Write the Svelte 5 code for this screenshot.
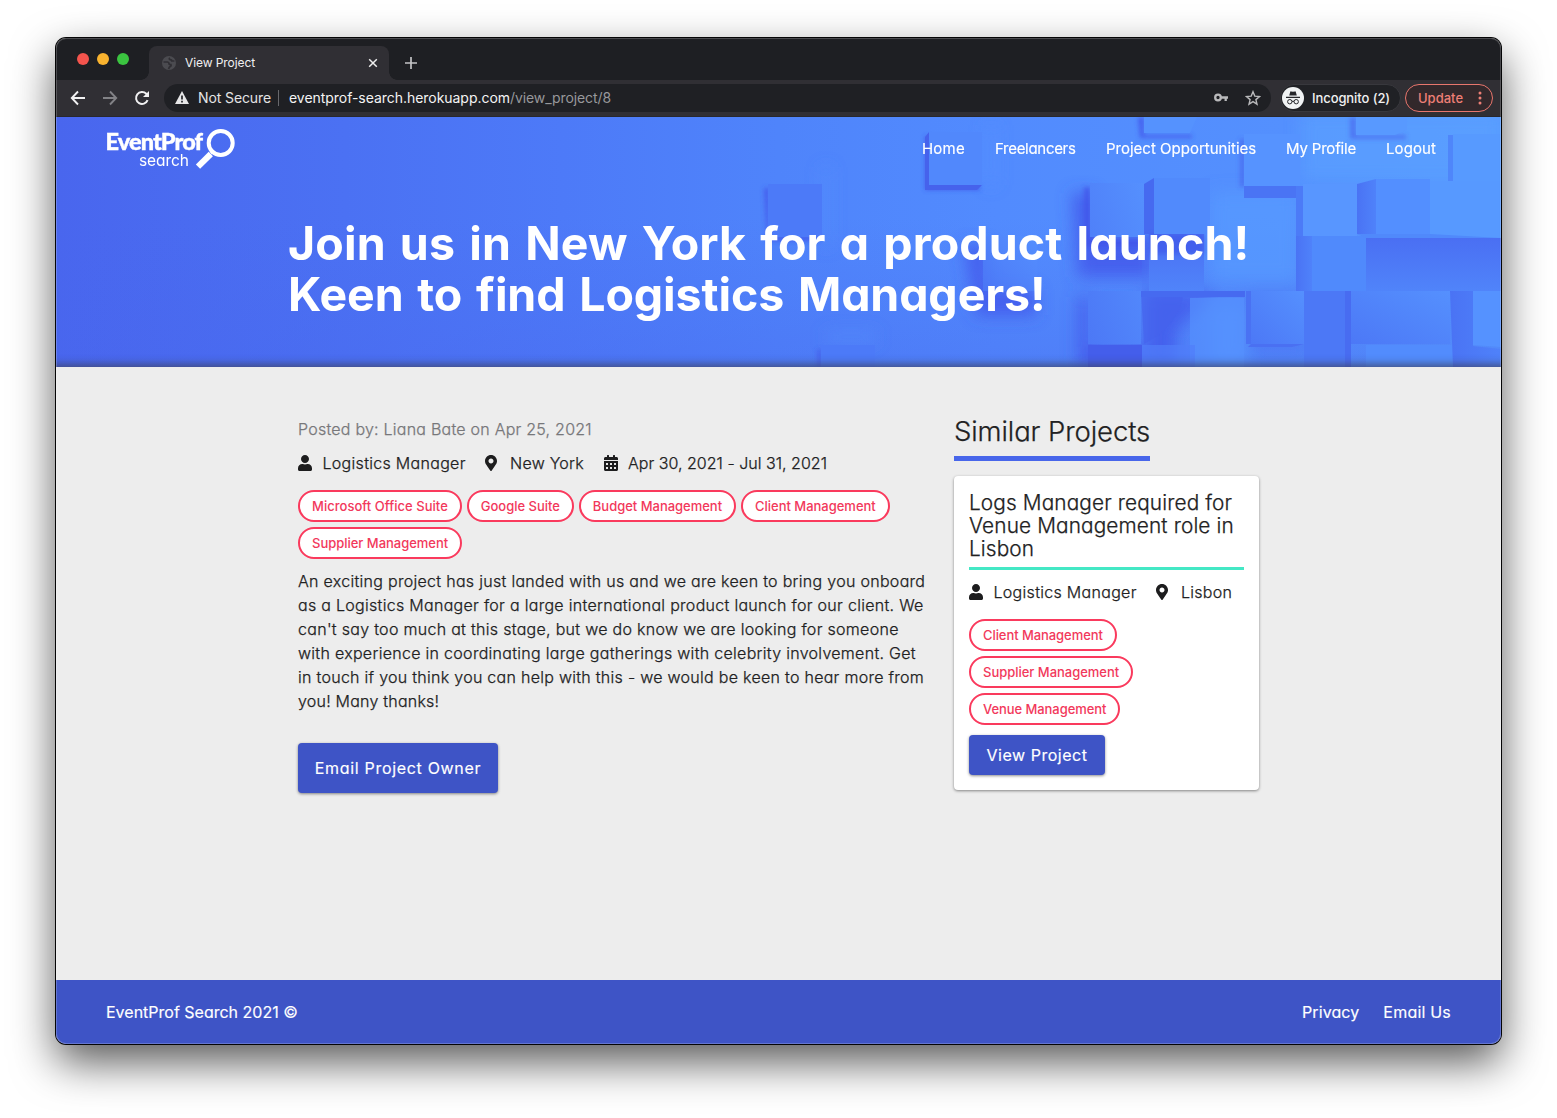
<script>
  const paths = {
    user: { w: 448, d: 'M224 256c70.7 0 128-57.3 128-128S294.7 0 224 0 96 57.3 96 128s57.3 128 128 128zm89.6 32h-16.7c-22.2 10.2-46.9 16-72.9 16s-50.6-5.8-72.9-16h-16.7C60.2 288 0 348.2 0 422.4V464c0 26.5 21.5 48 48 48h352c26.5 0 48-21.5 48-48v-41.6c0-74.2-60.2-134.4-134.4-134.4z' },
    pin: { w: 384, d: 'M172.268 501.67C26.97 291.031 0 269.413 0 192 0 85.961 85.961 0 192 0s192 85.961 192 192c0 77.413-26.97 99.031-172.268 309.67-9.535 13.774-29.93 13.773-39.464 0zM192 272c44.183 0 80-35.817 80-80s-35.817-80-80-80-80 35.817-80 80 35.817 80 80 80z' },
    calendar: { w: 448, d: 'M0 464c0 26.5 21.5 48 48 48h352c26.5 0 48-21.5 48-48V192H0v272zm320-196c0-6.600 5.400-12 12-12h40c6.600 0 12 5.400 12 12v40c0 6.600-5.400 12-12 12h-40c-6.600 0-12-5.400-12-12v-40zm0 128c0-6.600 5.400-12 12-12h40c6.600 0 12 5.400 12 12v40c0 6.600-5.400 12-12 12h-40c-6.600 0-12-5.400-12-12v-40zM192 268c0-6.600 5.400-12 12-12h40c6.600 0 12 5.400 12 12v40c0 6.600-5.400 12-12 12h-40c-6.600 0-12-5.400-12-12v-40zm0 128c0-6.600 5.400-12 12-12h40c6.600 0 12 5.400 12 12v40c0 6.600-5.400 12-12 12h-40c-6.600 0-12-5.400-12-12v-40zM64 268c0-6.600 5.400-12 12-12h40c6.600 0 12 5.400 12 12v40c0 6.600-5.400 12-12 12H76c-6.600 0-12-5.400-12-12v-40zm0 128c0-6.600 5.400-12 12-12h40c6.600 0 12 5.400 12 12v40c0 6.600-5.400 12-12 12H76c-6.600 0-12-5.400-12-12v-40zM400 64h-48V16c0-8.800-7.200-16-16-16h-32c-8.800 0-16 7.200-16 16v48H160V16c0-8.800-7.200-16-16-16h-32c-8.800 0-16 7.200-16 16v48H48C21.500 64 0 85.500 0 112v48h448v-48c0-26.500-21.500-48-48-48z' }
  };
  const skills = ['Microsoft Office Suite', 'Google Suite', 'Budget Management', 'Client Management', 'Supplier Management'];
  const similarSkills = ['Client Management', 'Supplier Management', 'Venue Management'];
  const description = [
    'An exciting project has just landed with us and we are keen to bring you onboard',
    'as a Logistics Manager for a large international product launch for our client. We',
    "can't say too much at this stage, but we do know we are looking for someone",
    'with experience in coordinating large gatherings with celebrity involvement. Get',
    'in touch if you think you can help with this - we would be keen to hear more from',
    'you! Many thanks!'
  ];
</script>

{#snippet icon(name)}
  <svg class="icon {name}" viewBox="0 0 {paths[name].w} 512"><path d={paths[name].d} /></svg>
{/snippet}

<div class="desktop">
  <div class="window">
    <div class="tabs">
      <div class="lights"><i class="red"></i><i class="amber"></i><i class="green"></i></div>
      <div class="tab">
        <svg class="globe" viewBox="0 0 14 14"><circle cx="7" cy="7" r="7" fill="#4b4b50" /><path d="M1.500 6h4q1.500.3 1.500 1.500t2 1.200q.6 1.500-1.500 2.300l-1 2" fill="none" stroke="#302f34" stroke-width="1.700" /><path d="M8 1.800q-1.500 1.200 0 1.800 1.800 0 1.800 1.400h2.600" fill="none" stroke="#302f34" stroke-width="1.700" /></svg>
        <span>View Project</span>
        <svg class="close" viewBox="0 0 10 10"><path d="M1.200 1.200l7.600 7.600M8.800 1.200L1.200 8.800" stroke="#eee" stroke-width="1.500" /></svg>
      </div>
      <svg class="plus" viewBox="0 0 12 12"><path d="M6 0v12M0 6h12" stroke="#c4c4c6" stroke-width="1.700" /></svg>
    </div>
    <div class="toolbar">
      <svg class="nav-icon" viewBox="0 0 16 16"><path d="M15 8H2M8 1.500L1.800 8 8 14.500" fill="none" stroke="#f1f1f2" stroke-width="1.900" /></svg>
      <svg class="nav-icon" viewBox="0 0 16 16"><path d="M1 8h13M8 1.500L14.200 8 8 14.500" fill="none" stroke="#828286" stroke-width="1.900" /></svg>
      <svg class="nav-icon" viewBox="0 0 16 16"><path d="M13.600 10.200A6 6 0 1 1 12.300 3.700L14 5.400" fill="none" stroke="#f1f1f2" stroke-width="2" /><path d="M15 1v6H9z" fill="#f1f1f2" /></svg>
      <div class="address">
        <svg class="warn" viewBox="0 0 14 13"><path d="M7 0l7 13H0z" fill="#e6e6e7" /><path d="M7 4.500v4M7 9.800v1.700" stroke="#1f2024" stroke-width="1.700" /></svg>
        <span class="insecure">Not Secure</span>
        <span class="bar"></span>
        <span class="host">eventprof-search.herokuapp.com</span><span class="path">/view_project/8</span>
        <svg class="key" viewBox="0 0 14 9"><circle cx="4" cy="4.500" r="2.800" fill="none" stroke="#b9b9bb" stroke-width="2.300" /><path d="M7 4.500h7M11.700 4.500v3.600" stroke="#b9b9bb" stroke-width="2.300" /></svg>
        <svg class="star" viewBox="0 0 16 16"><path d="M8 1.700l1.800 4.400 4.700.4-3.600 3.100 1.100 4.600L8 11.700l-4 2.500 1.100-4.600-3.600-3.100 4.700-.4z" fill="none" stroke="#b9b9bb" stroke-width="1.400" /></svg>
      </div>
      <div class="incognito">
        <svg viewBox="0 0 22 22"><circle cx="11" cy="11" r="11" fill="#f1f3f4" /><path d="M7.200 8.600l1-3.700q.2-.7.900-.5l1.900.3 1.900-.3q.7-.2.900.5l1 3.700zM4 9.800h14v1.100H4z" fill="#25262a" /><circle cx="7.800" cy="14.700" r="2.200" fill="none" stroke="#25262a" /><circle cx="14.200" cy="14.700" r="2.200" fill="none" stroke="#25262a" /><path d="M10 14.500q1-.7 2 0" fill="none" stroke="#25262a" /></svg>
        <span>Incognito (2)</span>
      </div>
      <div class="update"><span>Update</span><svg viewBox="0 0 4 14"><circle cx="2" cy="2" r="1.500" /><circle cx="2" cy="7" r="1.500" /><circle cx="2" cy="12" r="1.500" /></svg></div>
    </div>

    <header class="hero">
      <svg class="cubes" viewBox="0 0 1445 250" preserveAspectRatio="none">
        <defs>
          <linearGradient id="base" x1="0" x2="1" y1="0" y2="0"><stop offset="0" stop-color="#4966ee" /><stop offset=".2" stop-color="#4b71f3" /><stop offset=".35" stop-color="#4d7af8" /><stop offset=".5" stop-color="#4f84fb" /><stop offset=".65" stop-color="#528bfe" /><stop offset=".85" stop-color="#5490fe" /><stop offset="1" stop-color="#579aff" /></linearGradient>
          <linearGradient id="low" x1="0" x2="0" y1="0" y2="1"><stop offset=".4" stop-color="#4866ed" stop-opacity="0" /><stop offset="1" stop-color="#4866ed" stop-opacity=".35" /></linearGradient>
          <linearGradient id="down" x1="0" x2="0" y1="0" y2="1"><stop offset="0" stop-color="#4a6ff3" /><stop offset="1" stop-color="#5084fa" /></linearGradient>
          <linearGradient id="side" x1="0" x2="1"><stop offset="0" stop-color="#4a73f4" /><stop offset="1" stop-color="#4f82fa" /></linearGradient>
          <linearGradient id="face" x1="0" x2="1" y1="1" y2="0"><stop offset="0" stop-color="#4c78f6" /><stop offset="1" stop-color="#5590fe" /></linearGradient>
          <filter id="soft" x="-50%" y="-50%" width="200%" height="200%"><feGaussianBlur stdDeviation="8" /></filter>
          <filter id="edge" x="-50%" y="-50%" width="200%" height="200%"><feGaussianBlur stdDeviation="2" /></filter>
        </defs>
        <rect width="1445" height="250" fill="url(#base)" />
        <rect width="1445" height="250" fill="url(#low)" />
        <g filter="url(#soft)">
          <path d="M712 50h54v80h8V50z M770 215h50v10h-50z M930 8v60h10V8z" fill="#5793ff" opacity=".45" />
          <path d="M908 128h24v44h48v26h-60zM1016 76h22v44h60v40h-76zM1022 180h12v50h52v20h-64z" fill="#4053e8" opacity=".75" />
          <path d="M1090 175h70l-40 40v35h-30z" fill="#4158ea" opacity=".8" />
          <path d="M1190 175h60v60h-60z" fill="#4562ec" opacity=".3" />
          <path d="M1155 75h87v90h-87zM1155 190h36v60h-36z" fill="#579aff" opacity=".7" />
          <path d="M1245 -5h200v70h-200z" fill="#5aa2ff" opacity=".6" />
        </g>
        <g filter="url(#edge)" fill="#4053e8">
          <path d="M708 71h5v48h50v5h-52zM869 19h5v50h50v4h-55zM1082 0h6v18h48v3h-52zM1028 70h6v52h55v8h-61z" opacity=".75" />
          <path d="M761 232h5v18h-5zM1294 0h6v18h50v4h-56zM1184 22h5v48h-5z" opacity=".5" />
        </g>
        <path d="M712 67h54v53h-54zM765 228h54v22h-54z" fill="#4c7af8" />
        <path d="M869 20l4-5v53h53l-5 5h-52z" fill="#4662ec" />
        <path d="M873 15h53v53h-53z" fill="#5188fc" />
        <path d="M927 119h54v55h-54z" fill="url(#face)" opacity=".85" />
        <path d="M1034 66h54v54h-54zM1032 174h53v53h-53z" fill="url(#face)" />
        <path d="M1085 174h43q-4 34-40 53z" fill="#4562ec" opacity=".65" />
        <path d="M1085 174h104v6h-104z" fill="#466af0" />
        <path d="M1134 181h54v69h-54z" fill="#5590fe" opacity=".7" />
        <path d="M1032 228h54v22h-54z" fill="#445eeb" />
        <path d="M1086 228h53v22h-53z" fill="#507dfa" opacity=".7" />
        <path d="M1088 0h53l-7 16h-46z" fill="#5592fe" />
        <path d="M1088 67l10-6v56h-10z" fill="#466af0" />
        <path d="M1093 117h55v57h-55z" fill="url(#down)" />
        <path d="M1093 117h55v20h-55z" fill="#4158ea" opacity=".7" filter="url(#edge)" />
        <path d="M1098 61h56v56h-56z" fill="#518afc" />
        <path d="M1086 120h7v54h-7z" fill="#4a75f5" opacity=".25" />
        <path d="M1188 69h52v12h-52z" fill="#4a74f4" />
        <path d="M1240 69h7v50h-7z" fill="#4c7bf7" />
        <path d="M1188 17h56v52h-56z" fill="#5693ff" />
        <path d="M1240 119h16v55h-16z" fill="url(#side)" />
        <path d="M1247 67h54v52h-54z" fill="#5896ff" />
        <path d="M1256 119h54v55h-54z" fill="#508afc" />
        <path d="M1300 0h51v13l-12 5h-39z" fill="#5899ff" />
        <path d="M1392 18h5v47h-5z" fill="#4f86fa" />
        <path d="M1397 17h48v48h-48z" fill="#579aff" />
        <path d="M1301 67l19-5v55h-19z" fill="url(#side)" />
        <path d="M1310 121h135v53h-135z" fill="url(#down)" />
        <path d="M1374 64h71v57h-71z" fill="#5799ff" />
        <path d="M1320 62h54v55h-54z" fill="#538fff" />
        <path d="M1301 117h73l71 4h-135z" fill="#5089fb" />
        <path d="M1190 174h5v53h-5z" fill="#4a72f3" />
        <path d="M1195 174h53v53h-53z" fill="url(#face)" />
        <path d="M1195 227h53l-12 3h-44z" fill="#4a70f2" />
        <path d="M1248 174h45v76h-45z" fill="#4c78f6" />
        <path d="M1289 174h6v76h-6z" fill="#486cf1" />
        <path d="M1295 174h99v53h-99z" fill="url(#face)" />
        <path d="M1310 228h87v22h-87z" fill="#528cfd" />
        <path d="M1394 174h23v55l28 3v18h-48z" fill="url(#side)" />
        <path d="M1417 174h28v56l-28-2z" fill="#5592ff" />
      </svg>
      <nav>
        <svg class="logo" viewBox="0 0 132 44">
          <text class="brand" x="-.500" y="24.500" textLength="97.500">EventProf</text>
          <text class="sub" x="33" y="41" textLength="50">search</text>
          <circle cx="114.700" cy="18" r="12" fill="none" stroke="#fff" stroke-width="4" />
          <path d="M104.800 29L92 41.700" stroke="#fff" stroke-width="6" /><path d="M108 25.500l-3 3" stroke="#fff" stroke-width="2.500" />
        </svg>
        <div class="links"><a class="l1">Home</a><a class="l2">Freelancers</a><a class="l3">Project Opportunities</a><a class="l4">My Profile</a><a class="l5">Logout</a></div>
      </nav>
      <h1><span class="h-a">Join us in New York for a product launch!</span><span class="h-b">Keen to find Logistics Managers!</span></h1>
    </header>

    <main>
      <article>
        <p class="posted">Posted by: Liana Bate on Apr 25, 2021</p>
        <div class="meta">{@render icon('user')}<span class="role">Logistics Manager</span>{@render icon('pin')}<span class="city">New York</span>{@render icon('calendar')}<span class="dates">Apr 30, 2021 - Jul 31, 2021</span></div>
        <div class="chips">{#each skills as s}<span class="chip">{s}</span>{/each}</div>
        <p class="description">{#each description as line}<span>{line}</span>{/each}</p>
        <button class="email">Email Project Owner</button>
      </article>
      <aside>
        <h2>Similar Projects</h2>
        <section class="card">
          <h3><span>Logs Manager required for</span><span>Venue Management role in</span><span>Lisbon</span></h3>
          <div class="meta">{@render icon('user')}<span class="role">Logistics Manager</span>{@render icon('pin')}<span class="city">Lisbon</span></div>
          <div class="chips stack">{#each similarSkills as s}<span class="chip">{s}</span>{/each}</div>
          <button class="view">View Project</button>
        </section>
      </aside>
    </main>

    <footer><span class="copy">EventProf Search 2021 ©</span><div><a class="privacy">Privacy</a><a class="mail">Email Us</a></div></footer>
  </div>
</div>

<style>
  :global(body) { margin: 0; background: #fff; }
  .desktop { box-sizing: border-box; width: 1557px; height: 1118px; padding: 38px 56px; overflow: hidden; font-family: Inter, sans-serif; }
  .window { position: relative; display: flex; flex-direction: column; width: 1445px; height: 1006px; border-radius: 10px; overflow: hidden; background: #ededed; box-shadow: 0 0 0 1px #050506, 0 18px 44px rgba(0, 0, 0, .66); }
  .window::after { content: ''; position: absolute; inset: 0; border-radius: 10px; box-shadow: inset 0 0 0 1px rgba(255, 255, 255, .2); pointer-events: none; }
  svg { display: block; flex: none; }

  .tabs { display: flex; align-items: center; height: 42px; background: #1e1f23; }
  .lights { display: flex; gap: 8px; margin-left: 21px; }
  .lights i { width: 12px; height: 12px; border-radius: 50%; }
  .red { background: #f4544d; } .amber { background: #f9b32f; } .green { background: #3bc440; }
  .tab { position: relative; align-self: flex-end; box-sizing: border-box; display: flex; align-items: center; width: 240px; height: 34px; margin-left: 20px; padding: 0 11px 0 13px; border-radius: 8px 8px 0 0; background: #302f34; color: #f0f0f1; font-size: 12px; letter-spacing: -.08px; }
  .tab::before, .tab::after { content: ''; position: absolute; bottom: 0; width: 8px; height: 8px; }
  .tab::before { left: -8px; background: radial-gradient(circle at 0 0, transparent 7.500px, #302f34 8px); }
  .tab::after { right: -8px; background: radial-gradient(circle at 100% 0, transparent 7.500px, #302f34 8px); }
  .tab span { flex: 1; margin-left: 9px; padding-bottom: 2px; }
  .globe { width: 14px; height: 14px; }
  .close { width: 10px; height: 10px; }
  .plus { width: 12px; height: 12px; margin: 8px 0 0 16px; }

  .toolbar { box-sizing: border-box; display: flex; align-items: center; height: 37px; padding: 0 8px 1px 14px; background: #302f34; border-bottom: 1px solid #28282d; color: #f0f0f1; }
  .nav-icon { width: 16px; height: 16px; margin-right: 16px; }
  .address { display: flex; align-items: center; width: 1097px; height: 28px; margin-left: -2px; padding-left: 10px; border-radius: 14px; background: #1f2024; font-size: 14px; }
  .warn { width: 14px; height: 13px; margin: 0 9px 0 1px; }
  .insecure { width: 73px; letter-spacing: -.11px; white-space: nowrap; color: #e4e4e5; }
  .bar { width: 1px; height: 16px; margin: 0 10px 0 7px; background: #68686c; }
  .host { letter-spacing: -.04px; color: #f4f4f4; }
  .path { letter-spacing: -.09px; color: #98989b; }
  .key { width: 14px; height: 9px; margin-left: auto; }
  .star { width: 16px; height: 16px; margin: 0 10px 0 17px; }
  .incognito { box-sizing: border-box; display: flex; align-items: center; width: 121px; height: 28px; margin-left: 9px; padding-left: 1px; border: 1px solid #38383d; border-radius: 14px; background: #202125; font-size: 13px; font-weight: 500; letter-spacing: -.08px; }
  .incognito svg { width: 22px; height: 22px; margin-right: 8px; }
  .incognito span { white-space: nowrap; }
  .update { box-sizing: border-box; display: flex; align-items: center; justify-content: space-between; width: 88px; height: 28px; margin-left: auto; padding: 0 10px 0 12px; border: 1.500px solid #e8766d; border-radius: 14px; background: #32282b; color: #ee7f76; font-size: 13px; font-weight: 500; }
  .update svg { width: 4px; height: 14px; fill: #ee7f76; }

  .hero { position: relative; height: 250px; color: #fff; }
  .hero::after { content: ''; position: absolute; inset: 0; box-shadow: inset 0 -11px 10px -9px rgba(62, 66, 96, .9); pointer-events: none; }
  .cubes { position: absolute; inset: 0; width: 100%; height: 100%; }
  nav { position: relative; display: flex; justify-content: space-between; height: 64px; padding: 8px 65px 0 50px; box-sizing: border-box; }
  .logo { width: 132px; height: 44px; overflow: visible; fill: #fff; }
  .brand { font: 900 23.500px Lato, sans-serif; stroke: #fff; stroke-width: .4px; }
  .sub { font: 400 15.500px Inter, sans-serif; font-feature-settings: 'cv11'; }
  .links { display: flex; gap: 30px; font-size: 15px; line-height: 48px; font-feature-settings: 'cv11'; white-space: nowrap; -webkit-text-stroke: .15px; }
  .l1 { width: 43px; } .l2 { width: 81px; } .l3 { width: 150px; } .l4 { width: 70px; } .l5 { width: 50px; }
  .l1 { letter-spacing: .2px; }
  .l2 { letter-spacing: -.3px; }
  .l4 { letter-spacing: -.18px; }
  .l5 { letter-spacing: .08px; }
  h1 { position: relative; margin: 37px 0 0 232px; font-size: 46.500px; font-weight: 700; line-height: 51px; font-feature-settings: 'cv11'; word-spacing: 3px; white-space: nowrap; }
  h1 span { display: block; }
  .h-a { letter-spacing: .12px; }
  .h-b { letter-spacing: -.12px; }

  main { flex: 1; display: flex; gap: 28px; padding: 50px 242px 0; color: #212122; font-weight: 300; font-size: 16px; line-height: 24px; font-feature-settings: 'cv11'; -webkit-text-stroke: .25px; }
  article { width: 628px; }
  p { margin: 0; white-space: nowrap; }
  .posted { color: #77777a; letter-spacing: .235px; }
  .meta { display: flex; align-items: center; height: 24px; margin-top: 10px; white-space: nowrap; }
  .icon { height: 16px; fill: #1d1d1e; }
  .icon.user, .icon.calendar { width: 14px; }
  .icon.pin { width: 12px; }
  .meta span { margin-left: 10.500px; }
  .meta .role { width: 143px; margin-right: 19.500px; letter-spacing: .3px; }
  .meta .city { width: 74px; margin-left: 13px; margin-right: 19.500px; letter-spacing: .25px; }
  .dates { letter-spacing: .02px; }
  .chips { display: flex; flex-wrap: wrap; gap: 5px; margin-top: 15px; -webkit-text-stroke: 0; }
  .chip { box-sizing: border-box; height: 32px; padding: 0 12px; border: 2px solid #fa3a5d; border-radius: 16px; background: #fff; color: #f2385b; font-size: 13px; font-weight: 500; line-height: 28px; letter-spacing: -.02px; font-feature-settings: normal; white-space: nowrap; }
  .chip:first-child { letter-spacing: .03px; }
  .description { margin-top: 10px; }
  .description span { display: block; letter-spacing: .295px; }
  .description span:nth-child(5) { letter-spacing: .28px; }
  .description span:nth-child(6) { letter-spacing: .22px; }
  button { display: block; padding: 0; border: 0; border-radius: 4px; background: #3e54c6; color: #fff; font: 400 16px Inter, sans-serif; font-feature-settings: 'cv11'; box-shadow: 0 1px 3px rgba(0, 0, 0, .45); -webkit-text-stroke: .15px; }
  .email { width: 200px; height: 50px; margin-top: 30px; letter-spacing: .68px; }
  .view { width: 136px; height: 40px; margin-top: 10px; letter-spacing: .52px; }
  aside { width: 305px; }
  h2 { width: 196px; height: 39px; margin: 0; border-bottom: 5px solid #4866ea; font-size: 27.500px; font-weight: 300; line-height: 28px; letter-spacing: -.1px; white-space: nowrap; }
  .card { box-sizing: border-box; width: 305px; height: 314px; margin-top: 15px; padding: 15px; border-radius: 4px; background: #fff; box-shadow: 0 1px 3px rgba(0, 0, 0, .45); }
  h3 { height: 76px; margin: 0; border-bottom: 3px solid #44e8c5; font-size: 20.800px; font-weight: 300; line-height: 23px; letter-spacing: .13px; white-space: nowrap; }
  h3 span { display: block; }
  .stack { flex-direction: column; align-items: flex-start; }
  .stack .chip { letter-spacing: -.07px; }
  .stack .chip:nth-child(2) { letter-spacing: -.02px; }

  footer { display: flex; justify-content: space-between; height: 64px; padding: 0 50px; background: #3e54c6; color: #fff; font-size: 16px; line-height: 64px; font-feature-settings: 'cv11'; white-space: nowrap; -webkit-text-stroke: .15px; }
  footer div { display: flex; gap: 24px; }
  .privacy { letter-spacing: .1px; }
  .mail { letter-spacing: .2px; }
</style>
